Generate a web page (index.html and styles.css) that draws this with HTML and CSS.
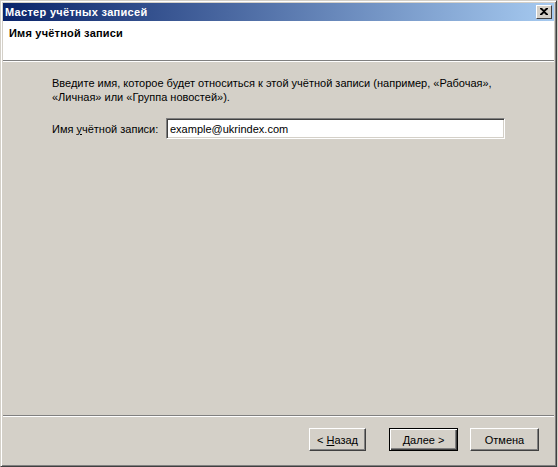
FILE: index.html
```html
<!DOCTYPE html>
<html lang="ru">
<head>
    <meta charset="UTF-8">
    <title>Мастер учётных записей</title>
    <link rel="stylesheet" href="styles.css">
</head>
<body>
    <div class="window">
        <div class="titlebar">
            <span class="title">Мастер учётных записей</span>
            <span class="title-btn"><svg class="x-icon" width="8" height="7" viewBox="0 0 8 7"><path d="M0 0h2l2 2 2-2h2v1L5 3.5 8 6v1H6L4 5 2 7H0V6l3-2.5L0 1z" fill="#000"/></svg></span>
        </div>
        <div class="header">
            <h1>Имя учётной записи</h1>
        </div>
        <div class="content">
            <p class="intro">Введите имя, которое будет относиться к этой учётной записи (например, «Рабочая»,<br>«Личная» или «Группа новостей»).</p>
            <div class="field">
                <label for="account">Имя <u>у</u>чётной записи:</label>
                <input id="account" type="text" value="example@ukrindex.com">
            </div>
        </div>
        <div class="footer">
            <button class="btn">&lt; <u>Н</u>азад</button>
            <button class="btn default"><u>Д</u>алее &gt;</button>
            <button class="btn cancel">Отмена</button>
        </div>
    </div>
</body>
</html>
```

FILE: styles.css
```css
html, body {
    margin: 0;
    height: 100%;
}
body {
    background-color: #d4d0c8;
    font-family: "Liberation Sans", Arial, sans-serif;
    font-size: 11px;
    color: #000;
}
.window {
    box-sizing: border-box;
    width: 557px;
    height: 467px;
    border: 1px solid;
    border-color: #d4d0c8 #404040 #404040 #d4d0c8;
    box-shadow: inset 1px 1px #fff, inset -1px -1px #808080;
    padding: 2px;
    display: flex;
    flex-direction: column;
}
.titlebar {
    height: 18px;
    background: linear-gradient(to right, #0a246a, #a6caf0);
    display: flex;
    align-items: center;
    padding: 0 2px;
}
.title {
    flex: 1;
    color: #fff;
    font-weight: bold;
    white-space: nowrap;
    letter-spacing: 0.3px;
}
.title-btn {
    width: 14px;
    height: 12px;
    background-color: #d4d0c8;
    border: 1px solid;
    border-color: #fff #404040 #404040 #fff;
}
.x-icon {
    display: block;
    margin: 2px 0 0 3px;
}
.header {
    background-color: #fff;
    height: 39px;
    border-bottom: 1px solid #808080;
    box-shadow: 0 1px #fff;
    padding: 0 6px;
}
.header h1 {
    margin: 0;
    padding-top: 6px;
    font-size: 11px;
    font-weight: bold;
    letter-spacing: 0.2px;
}
.content {
    flex: 1;
    padding: 14px 0 0 49px;
    margin-top: 1px;
}
.intro {
    margin: 0;
    line-height: 14px;
    white-space: nowrap;
}
.field {
    display: flex;
    align-items: center;
    margin-top: 14px;
}
.field label {
    width: 114px;
    white-space: nowrap;
}
.field input {
    box-sizing: border-box;
    width: 339px;
    height: 21px;
    font: inherit;
    padding: 1px 3px;
    border: 1px solid;
    border-color: #808080 #fff #fff #808080;
    box-shadow: inset 1px 1px #404040, inset -1px -1px #d4d0c8;
    outline: none;
}
.footer {
    height: 49px;
    border-top: 1px solid #808080;
    box-shadow: inset 0 1px #fff;
    display: flex;
    justify-content: flex-end;
    align-items: flex-start;
    padding: 12px 15px 0 0;
    box-sizing: border-box;
}
.btn {
    width: 57px;
    height: 23px;
    margin-left: 23px;
    font: inherit;
    background-color: #d4d0c8;
    border: 1px solid;
    border-color: #fff #404040 #404040 #fff;
    box-shadow: inset -1px -1px #808080;
    padding: 0;
}
.btn.default {
    width: 69px;
    border: 1px solid #000;
    box-shadow: inset 1px 1px #fff, inset -1px -1px #404040, inset -2px -2px #808080;
}
.btn.cancel {
    width: 69px;
    margin-left: 12px;
}
```
